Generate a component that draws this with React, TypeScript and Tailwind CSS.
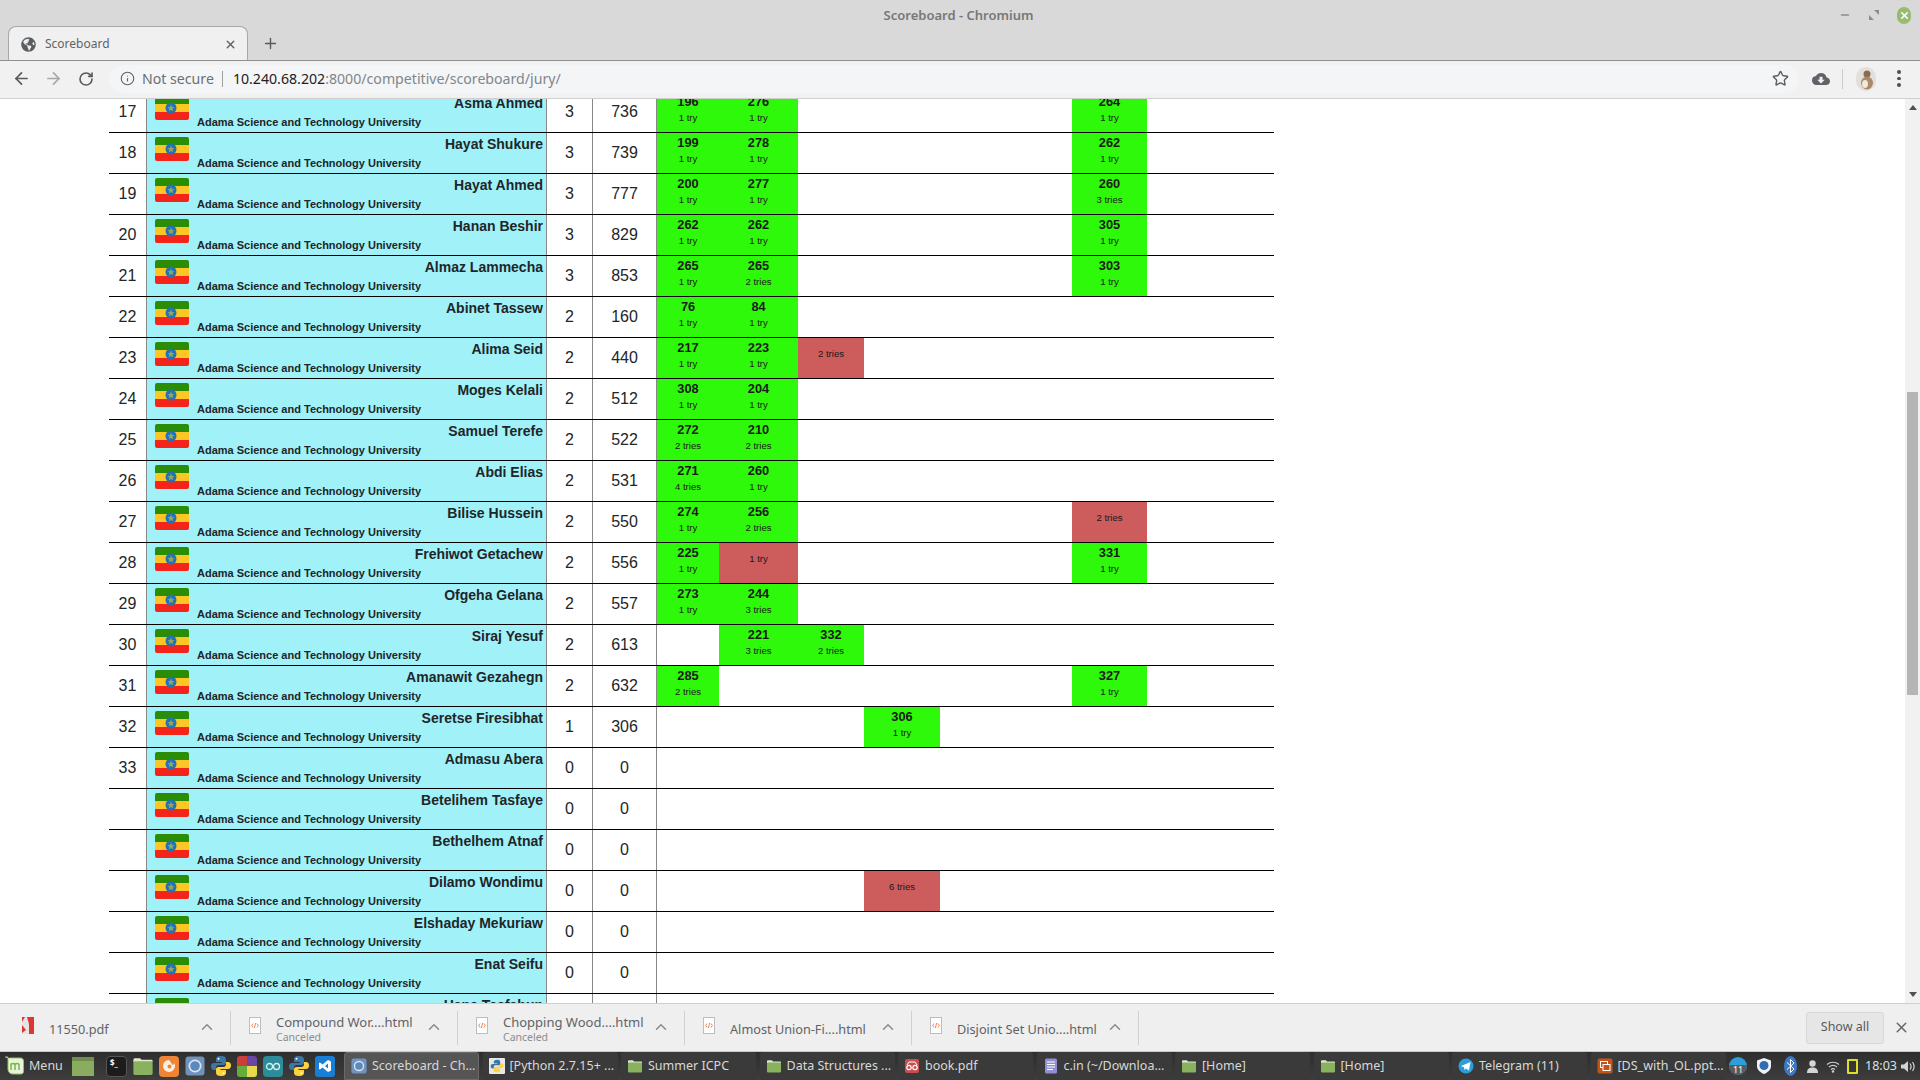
import React from "react";
import { ArrowLeft, ArrowRight, RotateCw, Info, Star, ChevronUp, X, Plus, Minus } from "lucide-react";
import { FaGlobeAmericas } from "react-icons/fa";
import { MdCloudDownload } from "react-icons/md";

type Cell = { col: number; score?: number; tries: string };
type Row = { rank?: number; name: string; solved: number; total: number; cells: Cell[] };

const c = (col: number, score: number | undefined, tries: string): Cell => ({ col, score, tries });
const T1 = "1 try";

const rows: Row[] = [
  { rank: 17, name: "Asma Ahmed", solved: 3, total: 736, cells: [c(0, 196, T1), c(1, 276, T1), c(5, 264, T1)] },
  { rank: 18, name: "Hayat Shukure", solved: 3, total: 739, cells: [c(0, 199, T1), c(1, 278, T1), c(5, 262, T1)] },
  { rank: 19, name: "Hayat Ahmed", solved: 3, total: 777, cells: [c(0, 200, T1), c(1, 277, T1), c(5, 260, "3 tries")] },
  { rank: 20, name: "Hanan Beshir", solved: 3, total: 829, cells: [c(0, 262, T1), c(1, 262, T1), c(5, 305, T1)] },
  { rank: 21, name: "Almaz Lammecha", solved: 3, total: 853, cells: [c(0, 265, T1), c(1, 265, "2 tries"), c(5, 303, T1)] },
  { rank: 22, name: "Abinet Tassew", solved: 2, total: 160, cells: [c(0, 76, T1), c(1, 84, T1)] },
  { rank: 23, name: "Alima Seid", solved: 2, total: 440, cells: [c(0, 217, T1), c(1, 223, T1), c(2, undefined, "2 tries")] },
  { rank: 24, name: "Moges Kelali", solved: 2, total: 512, cells: [c(0, 308, T1), c(1, 204, T1)] },
  { rank: 25, name: "Samuel Terefe", solved: 2, total: 522, cells: [c(0, 272, "2 tries"), c(1, 210, "2 tries")] },
  { rank: 26, name: "Abdi Elias", solved: 2, total: 531, cells: [c(0, 271, "4 tries"), c(1, 260, T1)] },
  { rank: 27, name: "Bilise Hussein", solved: 2, total: 550, cells: [c(0, 274, T1), c(1, 256, "2 tries"), c(5, undefined, "2 tries")] },
  { rank: 28, name: "Frehiwot Getachew", solved: 2, total: 556, cells: [c(0, 225, T1), c(1, undefined, T1), c(5, 331, T1)] },
  { rank: 29, name: "Ofgeha Gelana", solved: 2, total: 557, cells: [c(0, 273, T1), c(1, 244, "3 tries")] },
  { rank: 30, name: "Siraj Yesuf", solved: 2, total: 613, cells: [c(1, 221, "3 tries"), c(2, 332, "2 tries")] },
  { rank: 31, name: "Amanawit Gezahegn", solved: 2, total: 632, cells: [c(0, 285, "2 tries"), c(5, 327, T1)] },
  { rank: 32, name: "Seretse Firesibhat", solved: 1, total: 306, cells: [c(3, 306, T1)] },
  { rank: 33, name: "Admasu Abera", solved: 0, total: 0, cells: [] },
  { name: "Betelihem Tasfaye", solved: 0, total: 0, cells: [] },
  { name: "Bethelhem Atnaf", solved: 0, total: 0, cells: [] },
  { name: "Dilamo Wondimu", solved: 0, total: 0, cells: [c(3, undefined, "6 tries")] },
  { name: "Elshaday Mekuriaw", solved: 0, total: 0, cells: [] },
  { name: "Enat Seifu", solved: 0, total: 0, cells: [] },
  { name: "Hana Tesfahun", solved: 0, total: 0, cells: [] },
];

function Flag() {
  return (
    <svg width="34" height="24" viewBox="0 0 34 24" className="shrink-0">
      <defs>
        <clipPath id="flag-clip">
          <rect width="34" height="24" rx="2" />
        </clipPath>
      </defs>
      <g clipPath="url(#flag-clip)">
        <rect width="34" height="8" fill="#2b8c06" />
        <rect y="8" width="34" height="8" fill="#fcc624" />
        <rect y="16" width="34" height="8" fill="#f5241a" />
      </g>
      <circle cx="16" cy="12" r="5.5" fill="#2172b8" />
      <path d="M16 8.6l1 2.4 2.5.2-1.9 1.6.6 2.5-2.2-1.3-2.2 1.3.6-2.5-1.9-1.6 2.5-.2z" fill="#8fa860" />
    </svg>
  );
}

function ScoreCell({ cell }: { cell?: Cell }) {
  if (!cell) return <div />;
  if (cell.score === undefined) {
    return (
      <div className="bg-[#cd5c5c] text-center pt-[8px] text-[9.6px] leading-[16px] text-[#1a1a1a]">{cell.tries}</div>
    );
  }
  return (
    <div className="bg-[#2ff90a] flex flex-col items-center pt-[2px] text-[#1a1a1a]">
      <span className="text-[12.8px] font-bold leading-[16px]">{cell.score}</span>
      <span className="text-[9.6px] leading-[16px]">{cell.tries}</span>
    </div>
  );
}

function TableRow({ row }: { row: Row }) {
  return (
    <div className="grid grid-cols-[38px_400px_46px_64px_62px_79px_66px_76px_132px_75px_127px] h-[41px] border-b border-black w-[1165px] text-[#212529]">
      <div className="border-r border-[#888888] text-center text-[16px] leading-[40px]">{row.rank ?? ""}</div>
      <div className="border-r border-[#888888] bg-[#a0f2f8] flex pl-[8px] pt-[4px]">
        <Flag />
        <div className="flex-1 ml-[8px] pr-[3px] flex flex-col">
          <div className="text-right text-[14px] font-bold leading-[17px] -mt-[1px]">{row.name}</div>
          <div className="text-[11px] font-bold leading-[14px] mt-[3px]">Adama Science and Technology University</div>
        </div>
      </div>
      <div className="border-r border-[#888888] text-center text-[16px] leading-[40px]">{row.solved}</div>
      <div className="border-r border-[#888888] text-center text-[16px] leading-[40px]">{row.total}</div>
      {[0, 1, 2, 3, 4, 5, 6].map((i) => (
        <ScoreCell key={i} cell={row.cells.find((x) => x.col === i)} />
      ))}
    </div>
  );
}

function Python() {
  return (
    <svg width="22" height="22" viewBox="0 0 22 22">
      <path d="M11 1c-4 0-5 1.500-5 3.500V7h5.500v1H4C2 8 1 9.500 1 11.500S2 15 4 15h2v-2.500C6 11 7 10 8.500 10h5C15 10 16 9 16 7.500v-3C16 2 14.500 1 11 1z" fill="#3b77a8" />
      <path d="M11 21c4 0 5-1.500 5-3.500V15h-5.500v-1H18c2 0 3-1.500 3-3.500S20 7 18 7h-2v2.500c0 1.500-1 2.500-2.500 2.500h-5C7 12 6 13 6 14.500v3C6 20 7.500 21 11 21z" fill="#fdd23c" />
      <circle cx="8.500" cy="3.800" r="1" fill="#fff" />
      <circle cx="13.500" cy="18.200" r="1" fill="#fff" />
    </svg>
  );
}

function Folder({ size = 16 }: { size?: number }) {
  return (
    <svg width={size} height={size} viewBox="0 0 16 16" className="shrink-0">
      <path d="M1 3.500C1 2.700 1.500 2.300 2.200 2.300h3.600L7 3.500h7c.7 0 1 .4 1 1V5H1z" fill="#dfe6d2" />
      <rect x="1" y="4.500" width="14" height="10" rx="1.200" fill="#8ab25e" />
    </svg>
  );
}

function ChromiumIcon({ size = 16 }: { size?: number }) {
  return (
    <svg width={size} height={size} viewBox="0 0 20 20" className="shrink-0">
      <rect x="0.500" y="0.500" width="19" height="19" rx="3" fill="#6f93bb" />
      <circle cx="10" cy="10" r="6.500" fill="#dbe6f2" />
      <circle cx="10" cy="10" r="4.800" fill="#5b88bd" />
    </svg>
  );
}

function HtmlFile() {
  return (
    <svg width="12" height="17" viewBox="0 0 12 17" className="shrink-0">
      <rect x="0.500" y="0.500" width="11" height="16" fill="#fff" stroke="#bdbdbd" />
      <path d="M4 6.500L2.700 8.500 4 10.500M8 6.500l1.300 2L8 10.500M6.700 6L5.300 11" fill="none" stroke="#e8642c" strokeWidth="0.800" />
    </svg>
  );
}

function PdfFile() {
  return (
    <svg width="12" height="17" viewBox="0 0 12 17" className="shrink-0">
      <rect width="12" height="17" fill="#e4e4e4" />
      <path d="M5 0h7v17H7V7zM0 8l4 5-4 3z" fill="#dc3737" />
      <path d="M0 0h3L0 5z" fill="#dc3737" />
    </svg>
  );
}

const downloads: { name: string; sub?: string; pdf?: boolean; w: string }[] = [
  { name: "11550.pdf", pdf: true, w: "w-[231px] pl-[22px]" },
  { name: "Compound Wor....html", sub: "Canceled", w: "w-[227px] pl-[18px]" },
  { name: "Chopping Wood....html", sub: "Canceled", w: "w-[227px] pl-[18px]" },
  { name: "Almost Union-Fi....html", w: "w-[227px] pl-[18px]" },
  { name: "Disjoint Set Unio....html", w: "w-[227px] pl-[18px]" },
];

function DownloadItem({ d }: { d: (typeof downloads)[number] }) {
  return (
    <div className={`${d.w} h-[34px] flex items-center border-r border-[#d0d0d0] text-[#5f6368]`}>
      <div className="-mt-[4px]">{d.pdf ? <PdfFile /> : <HtmlFile />}</div>
      <div className="ml-[15px] flex-1 min-w-0">
        {d.sub ? (
          <div>
            <div className="text-[13px] leading-[17px] mt-[1px] whitespace-nowrap">{d.name}</div>
            <div className="text-[10.500px] leading-[12px] text-[#8a8d91]">{d.sub}</div>
          </div>
        ) : (
          <div className="text-[12.700px] leading-[17px] mt-[3px] whitespace-nowrap">{d.name}</div>
        )}
      </div>
      <ChevronUp size={18} strokeWidth={2} className="text-[#8a8a8a] mr-[14px] shrink-0 -mt-[2px]" />
    </div>
  );
}

function Python16() {
  return (
    <div className="w-[16px] h-[16px] shrink-0 overflow-hidden bg-[#e8e8e8] rounded-[1px] flex items-center justify-center">
      <svg width="14" height="14" viewBox="0 0 22 22">
        <path d="M11 1c-4 0-5 1.500-5 3.500V7h5.500v1H4C2 8 1 9.500 1 11.500S2 15 4 15h2v-2.500C6 11 7 10 8.500 10h5C15 10 16 9 16 7.500v-3C16 2 14.500 1 11 1z" fill="#3b77a8" />
        <path d="M11 21c4 0 5-1.500 5-3.500V15h-5.500v-1H18c2 0 3-1.500 3-3.500S20 7 18 7h-2v2.500c0 1.500-1 2.500-2.500 2.500h-5C7 12 6 13 6 14.500v3C6 20 7.500 21 11 21z" fill="#fdd23c" />
      </svg>
    </div>
  );
}

const windows: { label: string; icon: React.ReactNode; active?: boolean }[] = [
  { label: "Scoreboard - Ch...", icon: <ChromiumIcon />, active: true },
  { label: "[Python 2.7.15+ ...", icon: <Python16 /> },
  { label: "Summer ICPC", icon: <Folder /> },
  { label: "Data Structures ...", icon: <Folder /> },
  {
    label: "book.pdf",
    icon: (
      <svg width="16" height="16" viewBox="0 0 16 16" className="shrink-0">
        <rect x="1" y="1" width="14" height="14" rx="2" fill="#c94f4f" />
        <circle cx="5" cy="9.500" r="2.200" fill="none" stroke="#fff" strokeWidth="1.200" />
        <circle cx="11" cy="9.500" r="2.200" fill="none" stroke="#fff" strokeWidth="1.200" />
        <path d="M3 7l2-3h6l2 3" fill="none" stroke="#fff" />
      </svg>
    ),
  },
  {
    label: "c.in (~/Downloa...",
    icon: (
      <svg width="16" height="16" viewBox="0 0 16 16" className="shrink-0">
        <rect x="2" y="0.500" width="12" height="15" rx="1.500" fill="#8f8fd6" />
        <path d="M4 4h8M4 6.500h8M4 9h8M4 11.500h6" stroke="#fff" />
      </svg>
    ),
  },
  { label: "[Home]", icon: <Folder /> },
  { label: "[Home]", icon: <Folder /> },
  {
    label: "Telegram (11)",
    icon: (
      <svg width="16" height="16" viewBox="0 0 16 16" className="shrink-0">
        <circle cx="8" cy="8" r="7.500" fill="#2a9fdb" />
        <path d="M3 8l9.500-4-1.500 8.500L8 10.500l-1.500 1.500-.5-2.800z" fill="#fff" />
      </svg>
    ),
  },
  {
    label: "[DS_with_OL.ppt...",
    icon: (
      <svg width="16" height="16" viewBox="0 0 16 16" className="shrink-0">
        <rect x="0.500" y="0.500" width="15" height="15" rx="2" fill="#c4541a" />
        <rect x="3.500" y="3.500" width="7" height="6" fill="none" stroke="#fff" />
        <rect x="6" y="6.500" width="7" height="6" fill="#c4541a" stroke="#fff" />
      </svg>
    ),
  },
];

export default function App() {
  return (
    <div className="w-[1920px] h-[1080px] flex flex-col overflow-hidden bg-white font-['Liberation_Sans',sans-serif]">
      {/* Title bar + tab strip */}
      <div className="h-[61px] shrink-0 bg-[#d9d9d9] border-b border-[#8f8f8f] font-['Noto_Sans',sans-serif]">
        <div className="h-[27px] grid grid-cols-[1fr_auto_1fr] items-center">
          <div />
          <div className="text-[13px] font-semibold text-[#777777] leading-[30px] -ml-[3px]">Scoreboard - Chromium</div>
          <div className="flex justify-end items-center pr-[9px] gap-[17px] text-[#8c8c8c]">
            <Minus size={12} strokeWidth={3} />
            <svg width="12" height="12" viewBox="0 0 12 12">
              <path d="M6 1h5v5zM6 11H1V6z" fill="#8c8c8c" />
            </svg>
            <div className="w-[14px] h-[17px] rounded-full bg-[#97bb72] flex items-center justify-center text-white">
              <X size={11} strokeWidth={3.500} />
            </div>
          </div>
        </div>
        <div className="h-[33px] flex items-end pl-[8px]">
          <div className="w-[240px] h-[34px] bg-[#f0f0f0] rounded-t-[8px] border border-b-0 border-[#a8a8a8] flex items-center pl-[12px] pr-[10px] pt-[1px] text-[#5f6368]">
            <FaGlobeAmericas size={15} className="text-[#5a5e63]" />
            <span className="ml-[9px] text-[12px] flex-1">Scoreboard</span>
            <X size={13} strokeWidth={2.500} />
          </div>
          <Plus size={17} strokeWidth={2} className="ml-[14px] mb-[8px] text-[#5a5a5a]" />
        </div>
      </div>

      {/* Toolbar */}
      <div className="h-[38px] shrink-0 bg-[#f1f1f1] border-b border-[#cfcfcf] flex items-center pb-[2px] font-['Noto_Sans',sans-serif]">
        <ArrowLeft size={19} strokeWidth={2.200} className="ml-[12px] text-[#5a5a5a]" />
        <ArrowRight size={19} strokeWidth={2.200} className="ml-[13px] text-[#a8a8a8]" />
        <RotateCw size={16} strokeWidth={2.400} className="ml-[15px] text-[#5a5a5a]" />
        <div className="ml-[15px] w-[1690px] h-[28px] rounded-full bg-[#f4f5f6] flex items-center">
          <Info size={15} strokeWidth={1.800} className="ml-[11px] text-[#5f6368]" />
          <span className="ml-[7px] text-[14.150px] text-[#6b6f73]">Not secure</span>
          <div className="ml-[8px] w-px h-[16px] bg-[#a0a0a0]" />
          <span className="ml-[10px] text-[14.150px] text-[#80868b]">
            <span className="text-[#202124]">10.240.68.202</span>:8000/competitive/scoreboard/jury/
          </span>
          <div className="flex-1" />
          <Star size={17} strokeWidth={2} className="mr-[10px] text-[#5a5f64]" />
        </div>
        <MdCloudDownload size={18} className="ml-[13px] text-[#5f6368]" />
        <div className="ml-[12px] w-px h-[20px] bg-[#cccccc]" />
        <div className="ml-[13px] w-[20px] h-[24px] rounded-full bg-[#e3dfdb] overflow-hidden flex items-center justify-center">
          <svg width="20" height="24" viewBox="0 0 20 24">
            <ellipse cx="11" cy="7" rx="3.500" ry="3.500" fill="#8a6b4a" />
            <ellipse cx="11" cy="16" rx="6" ry="6.500" fill="#a98a68" />
            <ellipse cx="9" cy="17" rx="3" ry="4" fill="#efe8dd" />
          </svg>
        </div>
        <div className="ml-[21px] flex flex-col gap-[3px]">
          <div className="w-[3.500px] h-[3.500px] rounded-full bg-[#4f4f4f]" />
          <div className="w-[3.500px] h-[3.500px] rounded-full bg-[#4f4f4f]" />
          <div className="w-[3.500px] h-[3.500px] rounded-full bg-[#4f4f4f]" />
        </div>
      </div>

      {/* Page */}
      <div className="flex-1 min-h-0 flex">
        <div className="flex-1 overflow-hidden pl-[109px]">
          <div className="-mt-[7px]">
            {rows.map((r) => (
              <TableRow key={r.name} row={r} />
            ))}
          </div>
        </div>
        <div className="w-[15px] shrink-0 bg-[#f1f1f1] flex flex-col items-center">
          <div className="mt-[6px] w-0 h-0 border-x-[4px] border-x-transparent border-b-[5px] border-b-[#505050]" />
          <div className="mt-[282px] w-[11px] h-[303px] bg-[#b5b5b5]" />
          <div className="flex-1" />
          <div className="mb-[6px] w-0 h-0 border-x-[4px] border-x-transparent border-t-[5px] border-t-[#505050]" />
        </div>
      </div>

      {/* Downloads bar */}
      <div className="h-[48px] shrink-0 bg-[#efefef] border-t border-[#cfcfcf] flex items-center font-['Noto_Sans',sans-serif]">
        {downloads.map((d) => (
          <DownloadItem key={d.name} d={d} />
        ))}
        <div className="flex-1" />
        <div className="w-[78px] h-[32px] rounded-[3px] bg-[#e6e6e6] border border-[#d6d6d6] text-[12.500px] text-[#5a5a5a] flex items-center justify-center">
          Show all
        </div>
        <X size={17} strokeWidth={2.200} className="ml-[9px] mr-[10px] text-[#6a6a6a]" />
      </div>

      {/* Taskbar */}
      <div className="h-[29px] shrink-0 bg-gradient-to-b from-[#2e2e2e] to-[#3d3d3d] border-t border-[#c8c8c8] flex items-center font-['Noto_Sans',sans-serif] text-[12.500px] text-[#d8d8d8]">
        <svg width="20" height="22" viewBox="0 0 20 22" className="ml-[4px] shrink-0">
          <path d="M1 2h3v12c0 3 2 5 5 5h8c1.500 0 2.500-1 2.500-2.500V6c0-2-1.500-3-3-3H6" fill="#e9f3dc" stroke="#8fc45a" strokeWidth="1" />
          <path d="M7 15V8.500M7 10c0-2 4-2 4 0v5M11 10c0-2 4-2 4 0v5" fill="none" stroke="#7ab648" strokeWidth="1.500" />
        </svg>
        <span className="ml-[5px] w-[43px]">Menu</span>
        <div className="w-[22px] h-[19px] bg-[#8aac5f] shrink-0 border-t-[4px] border-[#6f8d4b]" />
        <div className="ml-[12px] w-[21px] h-[21px] rounded-[4px] bg-[#1c1c1c] border border-[#555555] text-[8px] leading-[12px] pl-[3px] text-white font-bold shrink-0">$_</div>
        <div className="ml-[5px] shrink-0"><Folder size={22} /></div>
        <div className="ml-[5px] w-[20px] h-[21px] rounded-[4px] bg-[#ee8435] shrink-0 flex items-center justify-center">
          <svg width="14" height="14" viewBox="0 0 14 14">
            <path d="M7 1a6 6 0 1 0 6 6c0-1.500-.5-2.500-1-3 0 1.500-1 2-1.500 2C10 4 8 3 7 1z" fill="#fdf0e3" />
            <circle cx="7.500" cy="7.500" r="2" fill="#ee8435" />
          </svg>
        </div>
        <div className="ml-[6px] shrink-0"><ChromiumIcon size={20} /></div>
        <div className="ml-[5px] shrink-0"><Python /></div>
        <div className="ml-[5px] w-[20px] h-[21px] rounded-[3px] overflow-hidden grid grid-cols-2 grid-rows-2 shrink-0">
          <div className="bg-[#c9403a]" />
          <div className="bg-[#6b45a3]" />
          <div className="bg-[#67ab3b]" />
          <div className="bg-[#e7d94a]" />
        </div>
        <div className="ml-[6px] w-[20px] h-[21px] rounded-[4px] bg-[#2c8c99] shrink-0 flex items-center justify-center">
          <svg width="16" height="9" viewBox="0 0 16 9">
            <circle cx="4.500" cy="4.500" r="3" fill="none" stroke="#d6f0f2" strokeWidth="1.300" />
            <circle cx="11.500" cy="4.500" r="3" fill="none" stroke="#d6f0f2" strokeWidth="1.300" />
          </svg>
        </div>
        <div className="ml-[5px] shrink-0"><Python /></div>
        <div className="ml-[5px] w-[20px] h-[21px] rounded-[3px] bg-[#1a7fd4] shrink-0 flex items-center justify-center">
          <svg width="14" height="14" viewBox="0 0 14 14">
            <path d="M10 1l3 1.500v9L10 13 4.500 8.500 2 10.500 1 10V4l1-.5L4.500 5.500zM10 4.500L7 7l3 2.500z" fill="#fff" />
          </svg>
        </div>
        <div className="ml-[9px] flex gap-[3.500px] h-[28px]">
          {windows.map((w, i) => (
            <div
              key={i}
              className={`w-[135px] h-full rounded-t-[3px] flex items-center pl-[6px] whitespace-nowrap overflow-hidden ${
                w.active ? "bg-[#555555] border border-[#6a6a6a]" : "bg-[#3a3a3a]"
              }`}
            >
              {w.icon}
              <span className="ml-[5px]">{w.label}</span>
            </div>
          ))}
        </div>
        <div className="flex-1" />
        <div className="w-[18px] h-[18px] rounded-full bg-[#2a9fdb] shrink-0 overflow-hidden flex flex-col justify-end">
          <div className="h-[10px] bg-[#5a5a5a] text-[9px] leading-[10px] text-center text-white">11</div>
        </div>
        <svg width="16" height="18" viewBox="0 0 16 18" className="ml-[9px] shrink-0">
          <path d="M8 1l7 2.500V9c0 4-3.500 6.500-7 8-3.500-1.500-7-4-7-8V3.500z" fill="#eef2f6" />
          <circle cx="8" cy="8.500" r="4.500" fill="#2f6db0" />
        </svg>
        <svg width="13" height="20" viewBox="0 0 13 20" className="ml-[12px] shrink-0">
          <ellipse cx="6.500" cy="10" rx="6.500" ry="10" fill="#3f79c4" />
          <path d="M3 6.500l7 6.500-3.500 3.500V3.500L10 7l-7 6.500" fill="none" stroke="#fff" strokeWidth="1" />
        </svg>
        <svg width="11" height="13" viewBox="0 0 11 13" className="ml-[10px] shrink-0">
          <circle cx="5.500" cy="3.500" r="3.200" fill="#d5d5d5" />
          <path d="M0 13c0-4 2-5.500 5.500-5.500S11 9 11 13z" fill="#d5d5d5" />
        </svg>
        <svg width="14" height="13" viewBox="0 0 14 13" className="ml-[8px] shrink-0">
          <path d="M1 4.500c3.500-3 8.500-3 12 0M3 7c2.500-2 5.500-2 8 0M5 9.500c1.300-1 2.700-1 4 0" fill="none" stroke="#cfcfcf" strokeWidth="1.200" />
          <circle cx="7" cy="11.500" r="1.200" fill="#cfcfcf" />
        </svg>
        <div className="ml-[7px] w-[11px] h-[15px] border-2 border-[#dede2a] rounded-[1px] shrink-0" />
        <span className="ml-[7px] text-[12.500px] text-[#d8e0e8]">18:03</span>
        <svg width="14" height="13" viewBox="0 0 14 13" className="ml-[4px] mr-[5px] shrink-0">
          <path d="M0 4.500h3L7 1v11L3 8.500H0z" fill="#d5d5d5" />
          <path d="M9 3.500c1.300 1.800 1.300 4.200 0 6M11.500 2c2 2.800 2 6.200 0 9" fill="none" stroke="#d5d5d5" strokeWidth="1.200" />
        </svg>
      </div>
    </div>
  );
}
